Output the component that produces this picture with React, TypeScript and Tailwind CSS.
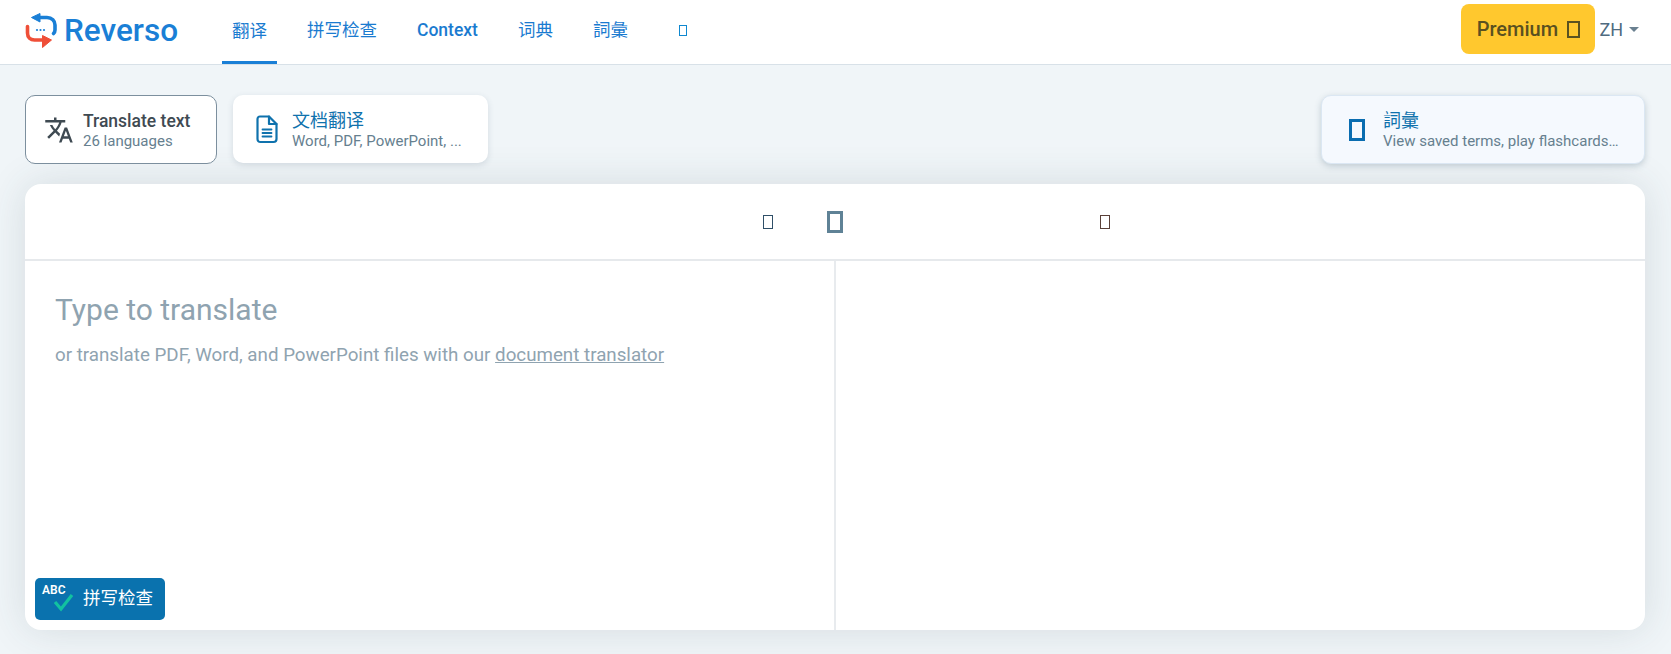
const font = { fontFamily: '"Roboto", "Noto Sans CJK SC", sans-serif' };

function Logo() {
  return (
    <svg width="36" height="36" viewBox="0 0 36 36" fill="none">
      <path d="M15 4.500 H23 C28 4.500 31 8 31 12 V17 C31 18.500 30.500 19.500 29.500 20.500" stroke="#1a7fd6" strokeWidth="3.600" strokeLinecap="round" />
      <path d="M16 0.500 L7.500 4.500 L16 9 Z" fill="#1a7fd6" stroke="#1a7fd6" strokeLinejoin="round" />
      <path d="M3.500 13.500 V20 C3.500 24.500 6.500 27 10.500 27 H20" stroke="#ef4f38" strokeWidth="3.600" strokeLinecap="round" />
      <path d="M18.500 22.500 L27.500 27 L18.500 34.500 Z" fill="#ef4f38" stroke="#ef4f38" strokeLinejoin="round" />
      <circle cx="13" cy="17" r="1.100" fill="#1a7fd6" />
      <circle cx="16.500" cy="17" r="1.100" fill="#1a7fd6" />
      <circle cx="20" cy="17" r="1.100" fill="#1a7fd6" />
    </svg>
  );
}

function TranslateIcon() {
  return (
    <svg width="30" height="30" viewBox="0 0 24 24" fill="#3f4a52">
      <path d="M12.870 15.070l-2.540-2.510.030-.030c1.740-1.940 2.980-4.170 3.710-6.530H17V4h-7V2H8v2H1v1.990h11.170C11.500 7.920 10.440 9.750 9 11.350 8.070 10.320 7.300 9.190 6.690 8h-2c.730 1.630 1.730 3.170 2.980 4.560l-5.090 5.020L4 19l5-5 3.110 3.110.760-2.040zM18.500 10h-2L12 22h2l1.120-3h4.750L21 22h2l-4.500-12zm-2.620 7l1.620-4.330L19.120 17h-3.240z" />
    </svg>
  );
}

function DocIcon() {
  return (
    <svg width="24" height="30" viewBox="0 0 24 30" fill="none" stroke="#0f72ad" strokeWidth="2.200" strokeLinejoin="round" strokeLinecap="round">
      <path d="M5 2.500 H14 L21.500 10 V25 C21.500 26.800 20.300 28 18.500 28 H5.500 C3.700 28 2.500 26.800 2.500 25 V5 C2.500 3.500 3.500 2.500 5 2.500 Z" />
      <path d="M14 2.500 V10 H21.500" />
      <path d="M7.500 15.500 H16.500 M7.500 19 H16.500 M7.500 22.500 H16.500" strokeWidth="1.800" />
    </svg>
  );
}

function SpellIcon() {
  return (
    <div className="relative h-[32px] w-[36px]">
      <span className="absolute left-0 top-[1px] text-[12px] font-semibold leading-none text-white">ABC</span>
      <svg className="absolute left-[10px] top-[9px]" width="24" height="20" viewBox="0 0 24 20" fill="none">
        <path d="M3 10 L9 17 L20 3" stroke="#12c2a0" strokeWidth="3.200" />
      </svg>
    </div>
  );
}

function Tofu({ className }: { className: string }) {
  return <span className={`inline-block border-solid ${className}`} />;
}

export default function App() {
  return (
    <div className="flex h-[654px] flex-col overflow-hidden" style={font}>
      <header className="flex h-[65px] shrink-0 items-center border-b border-[#d8e1e8] bg-white pl-[24px] pr-[32px]">
        <div className="flex w-[198px] items-center">
          <span className="mb-[3px]">
            <Logo />
          </span>
          <span className="mb-[3px] ml-[4px] text-[31.5px] font-medium leading-none text-[#1a7fd6]">Reverso</span>
        </div>
        <nav className="flex h-full items-center text-[17.5px] text-[#1a7bd0]">
          <a className="flex h-full w-[55px] items-center justify-center border-b-[3px] border-[#1a7fd6] pt-[1px]">翻译</a>
          <a className="ml-[30px] pb-[3px]">拼写检查</a>
          <a className="ml-[40px] pb-[3px] font-medium">Context</a>
          <a className="ml-[40px] pb-[3px]">词典</a>
          <a className="ml-[40px] pb-[3px]">詞彙</a>
          <Tofu className="mb-[3px] ml-[51px] h-[11px] w-[8px] border border-[#0f88d0]" />
        </nav>
        <div className="ml-auto flex items-center">
          <button className="mb-[6px] flex h-[50px] w-[134px] items-center justify-center gap-[9px] rounded-[8px] bg-[#ffc82e] text-[20px] font-medium text-[#5a5020]">
            Premium
            <Tofu className="h-[17px] w-[13px] border-2 border-[#5a5220]" />
          </button>
          <span className="mb-[5px] ml-[4px] text-[18px] text-[#4f6b80]">ZH</span>
          <span className="mb-[5px] ml-[6px] h-0 w-0 border-x-[5px] border-t-[5px] border-x-transparent border-t-[#6a8090]" />
        </div>
      </header>

      <div className="flex-1 bg-[#f0f5f8] pl-[25px] pr-[26px] pt-[30px]">
        <div className="relative z-10 flex items-start">
          <div className="flex h-[69px] w-[192px] items-center rounded-[10px] border border-[#7c8f9e] bg-white pl-[18px]">
            <TranslateIcon />
            <div className="ml-[9px]">
              <div className="text-[17.5px] font-medium leading-[22px] text-[#3f4a52]">Translate text</div>
              <div className="text-[15px] leading-[18px] text-[#66808f]">26 languages</div>
            </div>
          </div>
          <div className="ml-[16px] flex h-[68px] w-[255px] items-center rounded-[10px] bg-white pl-[22px] shadow-[0_2px_6px_rgba(60,90,110,0.16)]">
            <DocIcon />
            <div className="ml-[13px] pt-[1px]">
              <div className="text-[18px] leading-[22px] text-[#0f72ad]">文档翻译</div>
              <div className="text-[15px] leading-[18px] text-[#66808f]">Word, PDF, PowerPoint, ...</div>
            </div>
          </div>
          <div className="ml-auto flex h-[69px] w-[324px] items-center rounded-[10px] border border-[#dbe7f3] bg-[#f5f9fe] pl-[27px] shadow-[0_2px_6px_rgba(60,90,110,0.25)]">
            <Tofu className="h-[22px] w-[16px] border-[3px] border-[#0a6db0]" />
            <div className="ml-[18px] pt-[1px]">
              <div className="text-[18px] leading-[22px] text-[#0f72ad]">詞彙</div>
              <div className="text-[15px] leading-[18px] text-[#66808f]">View saved terms, play flashcards…</div>
            </div>
          </div>
        </div>

        <main className="relative mt-[20px] h-[446px] rounded-[16px] bg-white shadow-[0_0_40px_rgba(50,70,80,0.14)]">
          <div className="relative h-[77px] border-b-2 border-[#e6e9ec]">
            <Tofu className="absolute left-[738px] top-[31px] h-[14px] w-[10px] border border-[#2f4f68]" />
            <Tofu className="absolute left-[802px] top-[27px] h-[22px] w-[16px] border-[3px] border-[#5f8296]" />
            <Tofu className="absolute left-[1075px] top-[31px] h-[14px] w-[10px] border border-[#5a4038]" />
          </div>
          <div className="grid h-[369px] grid-cols-[811px_1fr]">
            <div className="border-r-2 border-[#e8ebee] pl-[30px] pt-[31px]">
              <div className="text-[30px] leading-[36px] text-[#8fa3b0]">Type to translate</div>
              <div className="mt-[15px] text-[18.75px] leading-[24px] text-[#8fa3b0]">
                or translate PDF, Word, and PowerPoint files with our <span className="underline">document translator</span>
              </div>
            </div>
            <div />
          </div>
          <button className="absolute bottom-[10px] left-[10px] flex h-[42px] w-[130px] items-center rounded-[5px] bg-[#0a72ae] pb-[1px] pl-[7px] text-[17.5px] text-white">
            <SpellIcon />
            <span className="ml-[5px] pb-[1px]">拼写检查</span>
          </button>
        </main>
      </div>
    </div>
  );
}
